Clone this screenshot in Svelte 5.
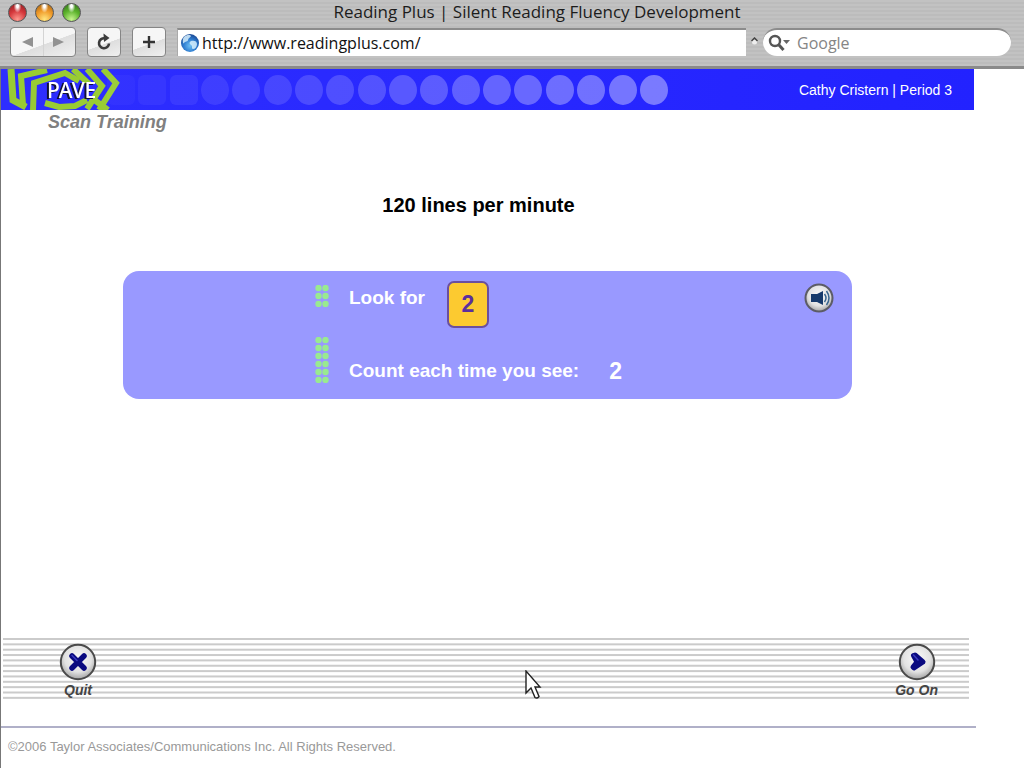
<script>
  let address = 'http://www.readingplus.com/';
  let search = '';

  const linesPerMinute = 120;
  const target = 2;

  // progress dots in the banner, they get lighter from left to right
  const dots = Array.from({ length: 18 }, (_, i) => i);
  const stripes = Array.from({ length: 12 }, (_, i) => i);
</script>

<div class="window">
  <header class="chrome">
    <div class="title-row">
      <div class="lights">
        <button class="light red" aria-label="Close"></button>
        <button class="light amber" aria-label="Minimize"></button>
        <button class="light green" aria-label="Zoom"></button>
      </div>
      <div class="title">Reading Plus | Silent Reading Fluency Development</div>
    </div>
    <div class="toolbar">
      <div class="history">
        <button class="nav" aria-label="Back">
          <svg width="12" height="12" viewBox="0 0 12 12"><path d="M1 6 12 1v10z" fill="#929292" /></svg>
        </button>
        <button class="nav" aria-label="Forward">
          <svg width="12" height="12" viewBox="0 0 12 12"><path d="M11 6 0 1v10z" fill="#929292" /></svg>
        </button>
      </div>
      <button class="tool" aria-label="Reload">
        <svg width="16" height="18" viewBox="0 0 16 18">
          <path d="M9 5.3A5 5 0 1 0 13 10.5" fill="none" stroke="#3c3c3c" stroke-width="2.6" />
          <path d="M7.500 0.5 13.5 5 8 9z" fill="#3c3c3c" />
        </svg>
      </button>
      <button class="tool" aria-label="Add bookmark">
        <svg width="14" height="14" viewBox="0 0 14 14"><path d="M7 1v12M1 7h12" stroke="#333" stroke-width="2.4" /></svg>
      </button>
      <div class="address">
        <svg width="20" height="20" viewBox="0 0 20 20">
          <defs>
            <radialGradient id="globe" cx="50%" cy="65%" r="60%">
              <stop offset="0" stop-color="#6fc0f4" />
              <stop offset="0.6" stop-color="#2f7dd0" />
              <stop offset="1" stop-color="#1c4f9c" />
            </radialGradient>
          </defs>
          <circle cx="10" cy="10" r="9" fill="url(#globe)" />
          <path d="M4 4c3-3 7-2 7-1S8 5 8 7s-3 1-4 3-2-4 0-6zM11 8c3-1 6 0 6 3s-2 5-4 5 0-3-2-4-2-3 0-4z" fill="#d6effc" opacity="0.85" />
        </svg>
        <input type="text" aria-label="Address" bind:value={address} />
      </div>
      <svg class="grip" width="7" height="10" viewBox="0 0 7 10">
        <circle cx="3.5" cy="5" r="2.5" fill="#eee" />
        <path d="M0.5 4 3.5 1l3 3" fill="none" stroke="#444" stroke-width="1.5" />
      </svg>
      <div class="search">
        <svg width="23" height="18" viewBox="0 0 23 18">
          <circle cx="7" cy="7" r="5" fill="none" stroke="#555" stroke-width="2.4" />
          <path d="m10.5 10.5 5 5.5" stroke="#555" stroke-width="3" />
          <path d="M15 6h7l-3.500 4z" fill="#666" />
        </svg>
        <input type="text" aria-label="Search" placeholder="Google" bind:value={search} />
      </div>
    </div>
  </header>

  <div class="page">
    <div class="banner">
      <svg class="logo" width="120" height="41" viewBox="0 0 120 41" role="img" aria-label="PAVE">
        <g fill="none" stroke="#99cc33" stroke-width="6">
          <path d="M10 0 12 31 25 38" stroke-width="7" />
          <path d="M22 36 20 7 46 1" />
          <path d="M32 41 33 14 64 4 78 12" />
          <path d="M44 34 58 38 74 37 86 31" />
          <path d="M72 0 88 15" />
          <path d="M86 0 101 17 86 40" />
          <path d="M102 0 115 14 98 41" />
          <path d="M92 30 107 41" />
        </g>
        <text class="pave" x="46" y="29">PAVE</text>
      </svg>
      <div class="dots">
        {#each dots as i}
          <span class="dot" class:soft={i < 3} style:opacity={0.03 + i * 0.021}></span>
        {/each}
      </div>
      <div class="student">Cathy Cristern | Period 3</div>
    </div>

    <main>
      <h1>Scan Training</h1>
      <h2>{linesPerMinute} lines per minute</h2>

      <section class="panel">
        <div class="steps">
          <svg width="14" height="22" viewBox="0 0 14 22">
            {#each [0, 1, 2] as row}
              <circle cx="3.5" cy={3 + row * 8} r="3.2" fill="#99ea90" />
              <circle cx="10.5" cy={3 + row * 8} r="3.2" fill="#99ea90" />
            {/each}
          </svg>
          <div class="step">
            <span class="label">Look for</span>
            <span class="card">{target}</span>
          </div>
          <svg width="14" height="46" viewBox="0 0 14 46">
            {#each [0, 1, 2, 3, 4, 5] as row}
              <circle cx="3.5" cy={3 + row * 8} r="3.2" fill="#99ea90" />
              <circle cx="10.5" cy={3 + row * 8} r="3.2" fill="#99ea90" />
            {/each}
          </svg>
          <div class="step count">
            <span class="label">Count each time you see:</span>
            <span class="number">{target}</span>
          </div>
        </div>
        <button class="sound" aria-label="Play sound">
          <svg width="30" height="30" viewBox="0 0 30 30">
            <circle cx="15" cy="15" r="13.5" fill="url(#knob)" stroke="#5c5c66" stroke-width="2" />
            <path d="M7 11h6l6-3v14l-6-3H7z" fill="#173a6b" />
            <path d="M20.500 11q3 4 0 8M22.500 8q5 7 0 14" fill="none" stroke="#3a6690" stroke-width="1.5" />
          </svg>
        </button>
      </section>
    </main>

    <nav class="controls">
      <svg class="stripes" width="100%" height="61">
        {#each stripes as i}
          <rect x="0" y={i * 5.35} width="100%" height="2" fill="#cbcbcb" />
        {/each}
      </svg>
      <button class="action">
        <svg width="38" height="38" viewBox="0 0 38 38">
          <defs>
            <radialGradient id="knob" cx="50%" cy="40%" r="60%">
              <stop offset="0" stop-color="#fafafa" />
              <stop offset="0.65" stop-color="#e2e2e2" />
              <stop offset="1" stop-color="#a4a4a4" />
            </radialGradient>
          </defs>
          <circle cx="19" cy="19" r="17.2" fill="url(#knob)" stroke="#4a4a4a" stroke-width="2" />
          <path d="m13 13 12 12M25 13 13 25" stroke="#0a0a80" stroke-width="5.5" stroke-linecap="round" />
          <path d="m13 12.5 5 5" stroke="#3a3ac0" stroke-width="1.5" stroke-linecap="round" />
        </svg>
        <span>Quit</span>
      </button>
      <button class="action">
        <svg width="38" height="38" viewBox="0 0 38 38">
          <circle cx="19" cy="19" r="17.2" fill="url(#knob)" stroke="#4a4a4a" stroke-width="2" />
          <path d="M15.500 12.500 17 12l8 7-9 6-1-1 4-5z" fill="#0a0a80" stroke="#0a0a80" stroke-width="5" stroke-linejoin="round" />
          <path d="M15.5 12 20 17" stroke="#3a3ac0" stroke-width="1.5" stroke-linecap="round" />
        </svg>
        <span>Go On</span>
      </button>
      <svg class="cursor" width="17" height="30" viewBox="0 0 17 30">
        <path d="M1 1v22l5-5 4 9.500q2 1.500 4-1l-4-9.500h5z" fill="#fff" stroke="#222" stroke-width="1.4" />
      </svg>
    </nav>

    <footer>©2006 Taylor Associates/Communications Inc. All Rights Reserved.</footer>
  </div>
</div>

<style>
  :global(body) {
    margin: 0;
    background: #fff;
  }

  .window {
    display: flex;
    flex-direction: column;
    min-height: 100vh;
    font-family: "Liberation Sans", Arial, sans-serif;
  }

  button {
    padding: 0;
    border: none;
    background: none;
    font-family: inherit;
    cursor: pointer;
  }

  svg {
    display: block;
    flex: none;
  }

  .chrome {
    box-sizing: border-box;
    height: 69px;
    border-bottom: 3px solid #8a8a8a;
    background: repeating-linear-gradient(#c2c2c2 0 2px, #bcbcbc 2px 4px);
    font-family: "Open Sans", "Noto Sans", sans-serif;
  }

  .title-row {
    display: grid;
    grid-template-columns: 1fr auto 1fr;
    box-sizing: border-box;
    height: 27px;
    padding-left: 50px;
  }

  .title {
    font-size: 17px;
    line-height: 24px;
    color: #1c1c1c;
  }

  .lights {
    display: flex;
    gap: 8px;
    padding-top: 3px;
    margin-left: -42px;
  }

  .light {
    box-sizing: border-box;
    width: 19px;
    height: 19px;
    border: 1px solid #555;
    border-radius: 50%;
  }

  .red {
    background: radial-gradient(ellipse at 50% 12%, #fff 8%, transparent 32%), radial-gradient(circle at 50% 90%, #ff9a90, #d5383c 50%, #8c1c20);
  }

  .amber {
    background: radial-gradient(ellipse at 50% 12%, #fff 8%, transparent 32%), radial-gradient(circle at 50% 90%, #ffe680, #f09a28 50%, #9c5c10);
  }

  .green {
    background: radial-gradient(ellipse at 50% 12%, #fff 8%, transparent 32%), radial-gradient(circle at 50% 90%, #c8f590, #5cb32c 50%, #2f6c18);
  }

  .toolbar {
    display: flex;
    align-items: center;
    height: 30px;
    padding: 0 13px 0 10px;
  }

  .history,
  .tool {
    display: flex;
    box-sizing: border-box;
    height: 30px;
    margin-right: 11px;
    border: 1px solid #858585;
    border-radius: 4px;
    background: linear-gradient(160deg, #f6f6f6 55%, #dedede 56%, #f0f0f0);
  }

  .history {
    width: 66px;
  }

  .nav {
    display: flex;
    flex: 1;
    align-items: center;
    justify-content: center;
  }

  .nav + .nav {
    border-left: 1px solid #d4d4d4;
  }

  .tool {
    align-items: center;
    justify-content: center;
    width: 34px;
  }

  .address {
    display: flex;
    flex: 1;
    align-items: center;
    box-sizing: border-box;
    height: 28px;
    padding-left: 2px;
    border-top: 2px solid #8c8c8c;
    border-left: 1px solid #aaa;
    background: #fff;
  }

  input {
    flex: 1;
    min-width: 0;
    padding: 0 0 0 2px;
    border: none;
    outline: none;
    background: none;
    font-family: inherit;
    font-size: 16px;
    line-height: 24px;
    color: #111;
  }

  .grip {
    margin: 0 5px;
  }

  .search {
    display: flex;
    align-items: center;
    box-sizing: border-box;
    width: 248px;
    height: 28px;
    padding: 0 12px 0 5px;
    border-top: 2px solid #8c8c8c;
    border-radius: 14px;
    background: #fff;
  }

  .search input {
    padding-left: 6px;
  }

  .search input::placeholder {
    color: #858585;
    opacity: 1;
  }

  .page {
    display: flex;
    flex: 1;
    flex-direction: column;
    padding-right: 48px;
    border-left: 1px solid #777;
  }

  .banner {
    display: flex;
    align-items: center;
    height: 41px;
    margin-right: 2px;
    background: linear-gradient(90deg, #2e2eff, #2222ff);
  }

  .pave {
    font-family: "Noto Sans", sans-serif;
    font-size: 21px;
    font-weight: 500;
    fill: #fff;
    filter: drop-shadow(-2px 1px 0 #111133);
  }

  .dots {
    display: flex;
    flex: none;
    justify-content: space-between;
    width: 561px;
    margin-left: -14px;
  }

  .dot {
    width: 28px;
    height: 30px;
    border-radius: 50%;
    background: #fff;
  }

  .soft {
    border-radius: 6px;
  }

  .student {
    flex: 1;
    padding-right: 22px;
    font-size: 14px;
    text-align: right;
    white-space: nowrap;
    color: #fff;
  }

  main {
    flex: 1;
  }

  h1 {
    margin: 0 0 0 47px;
    font-size: 18px;
    font-style: italic;
    line-height: 24px;
    color: #808080;
  }

  h2 {
    margin: 59px 20px 54px 0;
    font-size: 20px;
    line-height: 24px;
    text-align: center;
    color: #000;
  }

  .panel {
    display: flex;
    justify-content: space-between;
    align-items: flex-start;
    box-sizing: border-box;
    min-height: 128px;
    margin: 0 124px 0 122px;
    padding: 10px 18px 10px 192px;
    border-radius: 16px;
    background: #9999ff;
  }

  .steps {
    display: grid;
    grid-template-columns: 14px auto;
    grid-template-rows: 56px 46px;
    column-gap: 20px;
  }

  .steps svg {
    margin-top: 4px;
  }

  .steps svg:nth-of-type(2) {
    margin-top: 0;
  }

  .step {
    display: flex;
    color: #fff;
  }

  .label {
    font-size: 19px;
    font-weight: bold;
    line-height: 34px;
  }

  .card {
    box-sizing: border-box;
    width: 42px;
    height: 47px;
    margin-left: 22px;
    border: 2px solid #6b4f9e;
    border-radius: 7px;
    background: #fcca30;
    font-size: 23px;
    font-weight: bold;
    line-height: 43px;
    text-align: center;
    color: #5b2f9c;
  }

  .count {
    align-items: flex-end;
    margin-bottom: -5px;
  }

  .number {
    margin-left: 30px;
    font-size: 23px;
    font-weight: bold;
    line-height: 34px;
  }

  .sound {
    margin-top: 2px;
  }

  .controls {
    position: relative;
    display: flex;
    justify-content: space-between;
    height: 61px;
    margin: 0 7px 27px 2px;
    padding: 0 31px 0 56px;
  }

  .stripes {
    position: absolute;
    inset: 0;
  }

  .action {
    position: relative;
    display: flex;
    flex-direction: column;
    align-items: center;
    padding-top: 5px;
    font-size: 14px;
    font-style: italic;
    font-weight: bold;
    line-height: 18px;
    color: #444;
  }

  .cursor {
    position: absolute;
    top: 32px;
    left: 54%;
  }

  footer {
    padding: 10px 0 12px 7px;
    border-top: 2px solid #b0b0c8;
    font-size: 13px;
    line-height: 18px;
    color: #999;
  }
</style>
